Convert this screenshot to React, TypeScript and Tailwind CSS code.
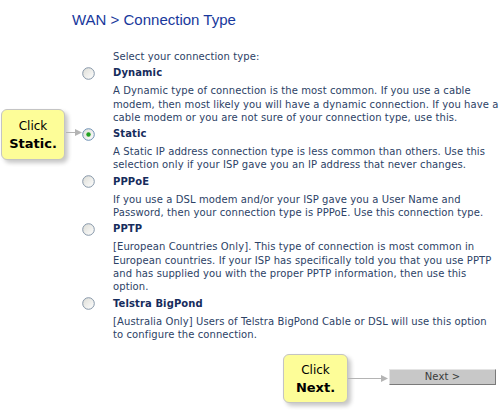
import React from "react";

const body = "font-['DejaVu_Sans',Verdana,sans-serif]";

function Radio({ checked }: { checked?: boolean }) {
  return (
    <svg width="13" height="13" viewBox="0 0 13 13" className="block">
      <defs>
        <linearGradient id={checked ? "rg1" : "rg0"} x1="0" y1="0" x2="1" y2="1">
          <stop offset="0" stopColor="#dcdcd6" />
          <stop offset="1" stopColor="#ffffff" />
        </linearGradient>
      </defs>
      <circle cx="6.5" cy="6.5" r="5.8" fill={`url(#${checked ? "rg1" : "rg0"})`} stroke={checked ? "#6c8fb3" : "#8596a8"} strokeWidth="1" />
      {checked && <circle cx="6.5" cy="6.5" r="2.2" fill="#21a121" />}
    </svg>
  );
}

function Option({ label, lines, checked }: { label: string; lines: string[]; checked?: boolean }) {
  return (
    <div className="flex pl-[82px] mb-[2px]">
      <div className="w-[13px] h-[16px] flex items-center">
        <Radio checked={checked} />
      </div>
      <div className="ml-[18px]">
        <div className="h-[16px] leading-[16px] text-[10px] font-bold text-[#162c5c]">{label}</div>
        <div className="mt-[3px] text-[10px] leading-[13.3px] text-[#2c4266] whitespace-nowrap">
          {lines.map((l, i) => (
            <div key={i}>{l}</div>
          ))}
        </div>
      </div>
    </div>
  );
}

function Arrow({ width }: { width: number }) {
  return (
    <svg width={width} height="9" viewBox={`0 0 ${width} 9`} className="block">
      <line x1="0" y1="4.5" x2={width - 6} y2="4.5" stroke="#b4b4b4" strokeWidth="1" />
      <polygon points={`${width - 7},1 ${width},4.5 ${width - 7},8`} fill="#b4b4b4" />
    </svg>
  );
}

export default function App() {
  return (
    <div className={`relative w-[500px] h-[412px] bg-white overflow-hidden ${body} tracking-[0.1px]`}>
      <div className="pt-[11px] pl-[72px] h-[29px] leading-[18px] text-[15px] text-[#18389c] font-['Liberation_Sans',Arial,sans-serif] tracking-normal">
        WAN &gt; Connection Type
      </div>
      <div className="mt-[21px] pl-[113px] text-[10px] leading-[13.3px] text-[#2c4266]">
        Select your connection type:
      </div>
      <div className="mt-[2px]">
        <Option
          label="Dynamic"
          lines={[
            "A Dynamic type of connection is the most common. If you use a cable",
            "modem, then most likely you will have a dynamic connection. If you have a",
            "cable modem or you are not sure of your connection type, use this.",
          ]}
        />
        <Option
          label="Static"
          checked
          lines={[
            "A Static IP address connection type is less common than others. Use this",
            "selection only if your ISP gave you an IP address that never changes.",
          ]}
        />
        <Option
          label="PPPoE"
          lines={[
            "If you use a DSL modem and/or your ISP gave you a User Name and",
            "Password, then your connection type is PPPoE. Use this connection type.",
          ]}
        />
        <Option
          label="PPTP"
          lines={[
            "[European Countries Only]. This type of connection is most common in",
            "European countries. If your ISP has specifically told you that you use PPTP",
            "and has supplied you with the proper PPTP information, then use this",
            "option.",
          ]}
        />
        <Option
          label="Telstra BigPond"
          lines={[
            "[Australia Only] Users of Telstra BigPond Cable or DSL will use this option",
            "to configure the connection.",
          ]}
        />
      </div>
      <div className="flex justify-end pr-[4px] mt-[28px]">
        <button className="w-[107px] h-[16px] bg-[#c8c8c8] border border-t-[#e4e4e4] border-l-[#e4e4e4] border-b-[#7a7a7a] border-r-[#7a7a7a] text-[10px] leading-[14px] text-[#3a3a3a] text-center">
          Next &gt;
        </button>
      </div>

      {/* Callout: Static */}
      <div className="absolute left-[1px] top-[109px] w-[64px] h-[51px] rounded-[6px] border border-[#c4c4c4] bg-[#fdfd98] shadow-[3px_3px_4px_rgba(0,0,0,0.22)] flex flex-col items-center justify-center text-black tracking-normal">
        <div className="text-[12px] leading-[17px]">Click</div>
        <div className="text-[13px] leading-[17px] font-bold">Static.</div>
      </div>
      <div className="absolute left-[66px] top-[128px]">
        <Arrow width={16} />
      </div>

      {/* Callout: Next */}
      <div className="absolute left-[283px] top-[354px] w-[65px] h-[49px] rounded-[6px] border border-[#c4c4c4] bg-[#fdfd98] shadow-[3px_3px_4px_rgba(0,0,0,0.22)] flex flex-col items-center justify-center text-black tracking-normal">
        <div className="text-[12px] leading-[17px]">Click</div>
        <div className="text-[13px] leading-[17px] font-bold">Next.</div>
      </div>
      <div className="absolute left-[348px] top-[374px]">
        <Arrow width={40} />
      </div>
    </div>
  );
}
